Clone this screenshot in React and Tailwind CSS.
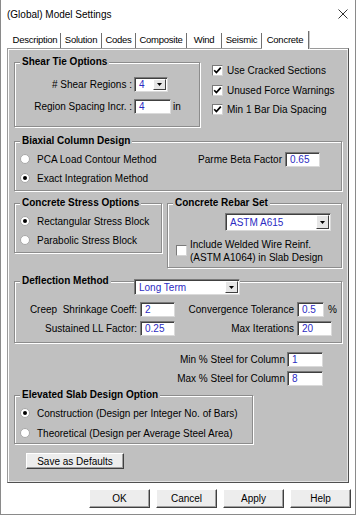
import React from 'react';

// classic win32 "Model Settings" dialog, Concrete tab

const tabs = [
  { label: 'Description', w: 'w-[51px]' },
  { label: 'Solution', w: 'w-[41px]' },
  { label: 'Codes', w: 'w-[34px]' },
  { label: 'Composite', w: 'w-[51px]' },
  { label: 'Wind', w: 'w-[35px]' },
  { label: 'Seismic', w: 'w-[40px]' },
  { label: 'Concrete', w: 'w-[47px]', active: true },
];

const Check = ({ checked }) => (
  <div className="w-[11px] h-[11px] shrink-0 bg-white border border-t-[#7a7a7a] border-l-[#7a7a7a] border-r-[#d4d4d4] border-b-[#d4d4d4] flex items-center justify-center">
    {checked && (
      <svg width="9" height="9" viewBox="0 0 9 9">
        <polyline points="1.2,4.2 3.4,6.6 7.8,1.6" fill="none" stroke="#000" strokeWidth="1.7" />
      </svg>
    )}
  </div>
);

const Radio = ({ on, label }) => (
  <div className="flex items-center h-[13px]">
    <div className="w-[10px] h-[10px] shrink-0 rounded-full bg-white border border-[#a8a8a8] flex items-center justify-center">
      {on && <div className="w-[4px] h-[4px] rounded-full bg-black" />}
    </div>
    <span className="ml-[7px] whitespace-nowrap">{label}</span>
  </div>
);

const Field = ({ value, className }) => (
  <div
    className={`h-[15px] bg-white border border-t-[#7a7a7a] border-l-[#7a7a7a] border-r-[#dadada] border-b-[#dadada] shadow-[inset_1px_1px_0_#404040] pl-[4px] leading-[13px] text-[#2b2bc2] ${className}`}
  >
    {value}
  </div>
);

const Drop = ({ value, className }) => (
  <div
    className={`flex bg-white border border-t-[#7a7a7a] border-l-[#7a7a7a] border-r-[#dadada] border-b-[#dadada] shadow-[inset_1px_1px_0_#404040] ${className}`}
  >
    <span className="flex-1 pl-[4px] self-center text-[#2b2bc2] whitespace-nowrap">{value}</span>
    <div className="w-[13px] my-[1px] mr-[1px] bg-[#e6e6e6] border border-t-white border-l-white border-r-[#404040] border-b-[#404040] flex items-center justify-center">
      <svg width="5" height="3" viewBox="0 0 5 3">
        <path d="M0 0h5L2.5 3z" fill="#000" />
      </svg>
    </div>
  </div>
);

const Group = ({ title, className, children }) => (
  <fieldset
    className={`border border-[#8c8c8c] shadow-[inset_1px_1px_0_#fff,1px_1px_0_#fff] p-0 m-0 min-w-0 ${className}`}
  >
    <legend className="ml-[5px] px-[2px] h-[12px] leading-[12px] font-bold bg-[#c0c0c0]">{title}</legend>
    {children}
  </fieldset>
);

const Btn = ({ label, className }) => (
  <div
    className={`flex items-center justify-center bg-[#ededed] border border-t-white border-l-white border-r-[#404040] border-b-[#404040] shadow-[inset_-1px_-1px_0_#a0a0a0] ${className}`}
  >
    {label}
  </div>
);

export default function App() {
  return (
    <div className="w-[356px] h-[515px] bg-white border-l border-r border-b border-[#8a8a8a] flex flex-col text-[10px] text-black font-['Liberation_Sans',Arial,sans-serif]">
      <div className="h-[28px] flex items-center justify-between pl-[6px] pr-[7px]">
        <span>(Global) Model Settings</span>
        <svg width="10" height="10" viewBox="0 0 10 10">
          <path d="M0.5 0.5L9.5 9.5M9.5 0.5L0.5 9.5" stroke="#333" strokeWidth="1" />
        </svg>
      </div>

      <div className="h-[20px] flex items-end pl-[9px]">
        {tabs.map((t) =>
          t.active ? (
            <div
              key={t.label}
              className={`${t.w} h-[18px] -mb-px relative z-10 bg-white border-r border-[#707070] shadow-[1px_0_0_#c8c8c8] flex items-center justify-center text-[9.5px] tracking-[-0.25px]`}
            >
              {t.label}
            </div>
          ) : (
            <div
              key={t.label}
              className={`${t.w} h-[15px] bg-white border-r border-[#707070] flex items-center justify-center text-[9.5px] tracking-[-0.25px]`}
            >
              {t.label}
            </div>
          )
        )}
      </div>

      <div className="ml-[6px] w-[342px] h-[435px] bg-[#c0c0c0] border border-t-[#9a9a9a] border-l-[#9a9a9a] border-r-[#505050] border-b-[#505050] shadow-[inset_1px_1px_0_#fff,inset_-1px_-1px_0_#e4e4e4] pl-[6px] flex flex-col">
        <div className="flex mt-[7px]">
          <Group title="Shear Tie Options" className="w-[186px] h-[71px]">
            <div className="flex items-center mt-[9px] h-[15px]">
              <span className="w-[117px] text-right">#&nbsp;Shear Regions :</span>
              <Drop value="4" className="ml-[2px] w-[34px] h-[15px]" />
            </div>
            <div className="flex items-center mt-[7px] h-[15px]">
              <span className="w-[117px] text-right">Region Spacing Incr. :</span>
              <Field value="4" className="ml-[2px] w-[37px]" />
              <span className="ml-[2px]">in</span>
            </div>
          </Group>
          <div className="ml-[12px] pt-[8px] flex flex-col gap-[6.5px]">
            {['Use Cracked Sections', 'Unused Force Warnings', 'Min 1 Bar Dia Spacing'].map((l) => (
              <div key={l} className="flex items-center h-[13px]">
                <Check checked />
                <span className="ml-[4px] whitespace-nowrap">{l}</span>
              </div>
            ))}
          </div>
        </div>

        <Group title="Biaxial Column Design" className="w-[328px] h-[56px] mt-[8px]">
          <div className="flex">
            <div className="flex flex-col gap-[6px] mt-[5.5px] pl-[5px]">
              <Radio label="PCA Load Contour Method" />
              <Radio on label="Exact Integration Method" />
            </div>
            <div className="ml-auto mr-[21px] mt-[5px] flex items-center h-[15px]">
              <span>Parme Beta Factor</span>
              <Field value="0.65" className="ml-[3px] w-[35px]" />
            </div>
          </div>
        </Group>

        <div className="flex items-start gap-[5px] mt-[6px]">
          <Group title="Concrete Stress Options" className="w-[148px] h-[56px]">
            <div className="flex flex-col gap-[6px] mt-[5.5px] pl-[5px]">
              <Radio on label="Rectangular Stress Block" />
              <Radio label="Parabolic Stress Block" />
            </div>
          </Group>
          <Group title="Concrete Rebar Set" className="w-[175px] h-[71px]">
            <Drop value="ASTM A615" className="ml-[57px] mt-[4px] w-[106px] h-[18px]" />
            <div className="flex items-center mt-[6.5px] ml-[8px]">
              <Check />
              <div className="ml-[3px] leading-[13px] whitespace-nowrap">
                <div>Include Welded Wire Reinf.</div>
                <div>(ASTM A1064) in Slab Design</div>
              </div>
            </div>
          </Group>
        </div>

        <Group title="Deflection Method" className="w-[328px] h-[68px] mt-[7px] relative">
          <Drop value="Long Term" className="absolute left-[119px] top-[-8px] w-[106px] h-[16px]" />
          <div className="flex items-center mt-[15px] h-[15px]">
            <span className="w-[122px] text-right whitespace-pre">Creep  Shrinkage Coeff:</span>
            <Field value="2" className="ml-[3px] w-[35px]" />
            <span className="w-[119px] text-right">Convergence Tolerance</span>
            <Field value="0.5" className="ml-[3px] w-[27px]" />
            <span className="ml-[4px]">%</span>
          </div>
          <div className="flex items-center mt-[4px] h-[15px]">
            <span className="w-[122px] text-right">Sustained LL Factor:</span>
            <Field value="0.25" className="ml-[3px] w-[35px]" />
            <span className="w-[119px] text-right">Max Iterations</span>
            <Field value="20" className="ml-[3px] w-[35px]" />
          </div>
        </Group>

        <div className="flex items-center mt-[9px] h-[14px]">
          <span className="w-[271px] text-right">Min % Steel for Column</span>
          <Field value="1" className="ml-[2px] w-[36px] h-[14px]" />
        </div>
        <div className="flex items-center mt-[5px] h-[14px]">
          <span className="w-[271px] text-right">Max % Steel for Column</span>
          <Field value="8" className="ml-[2px] w-[36px] h-[14px]" />
        </div>

        <Group title="Elevated Slab Design Option" className="w-[239px] h-[55px] mt-[4px]">
          <div className="flex flex-col gap-[7px] mt-[5.5px] pl-[5px]">
            <Radio on label="Construction (Design per Integer No. of Bars)" />
            <Radio label="Theoretical (Design per Average Steel Area)" />
          </div>
        </Group>

        <Btn label="Save as Defaults" className="ml-[12px] mt-[9px] w-[98px] h-[16px]" />
      </div>

      <div className="flex justify-end gap-[6px] pr-[4px] mt-[6px]">
        {['OK', 'Cancel', 'Apply', 'Help'].map((l) => (
          <Btn key={l} label={l} className="w-[61px] h-[19px]" />
        ))}
      </div>
    </div>
  );
}
